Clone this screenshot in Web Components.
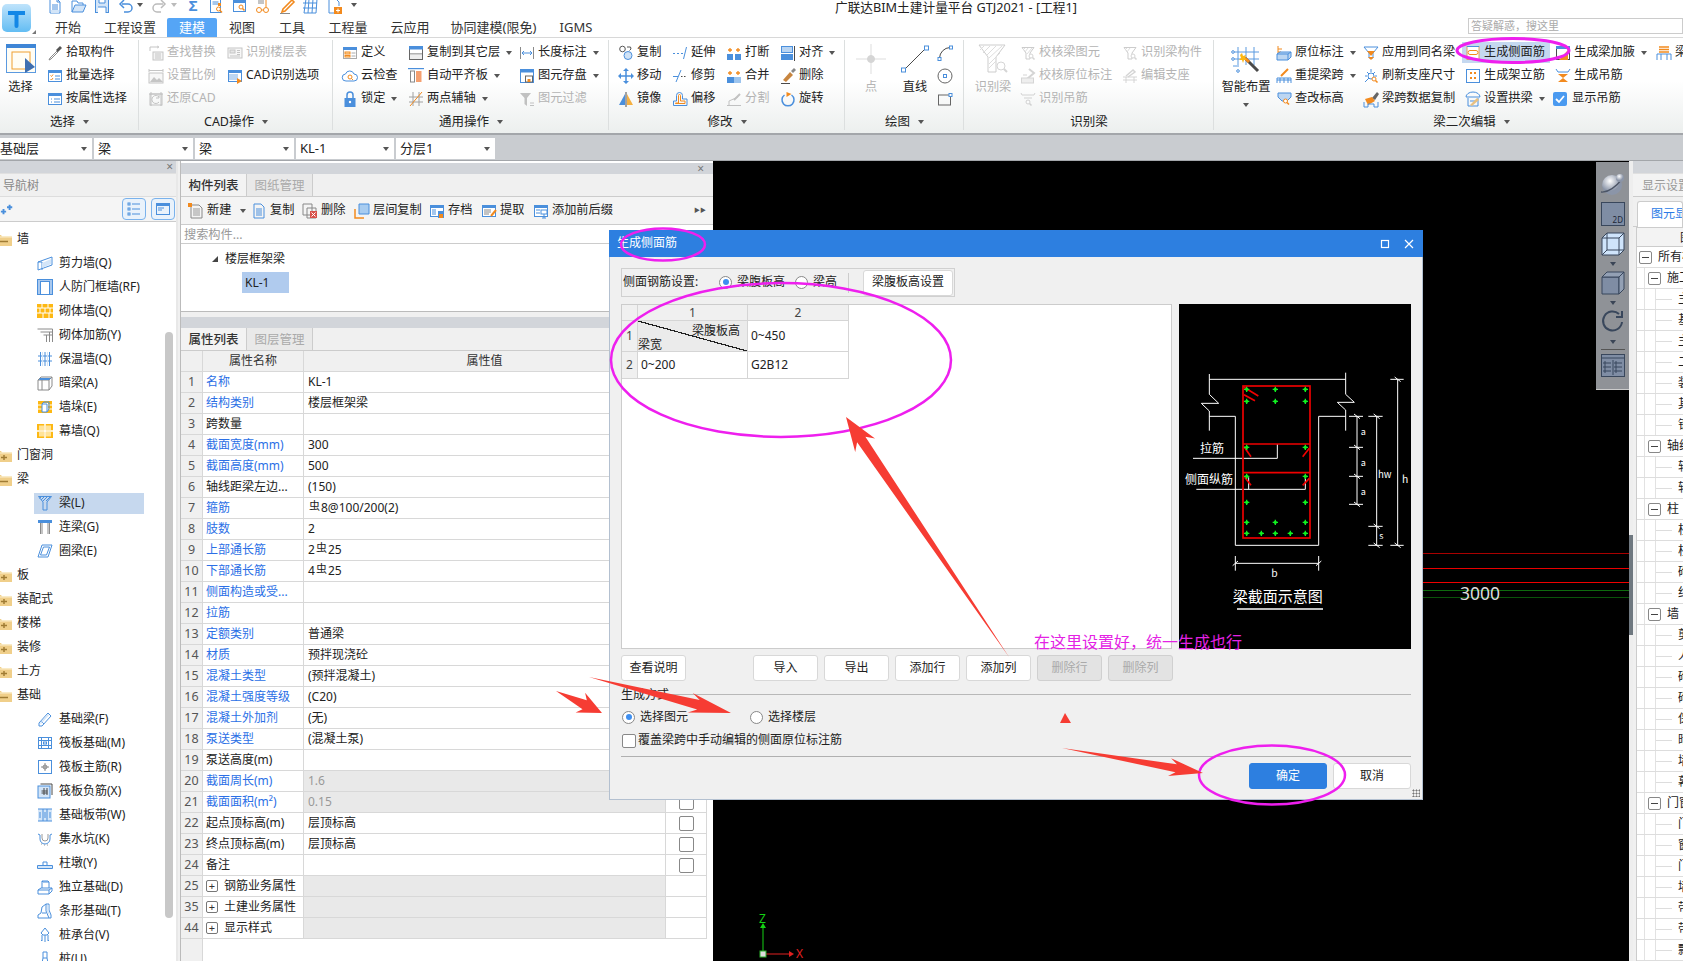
<!DOCTYPE html>
<html lang="zh">
<head>
<meta charset="utf-8">
<title>GTJ2021</title>
<style>
html,body{margin:0;padding:0;width:1683px;height:961px;overflow:hidden;background:#f0f0f0}
body{position:relative;font-family:"Noto Sans","Noto Sans CJK SC",sans-serif;font-size:12px;color:#222;line-height:1.2}
.work{display:flex;height:800px}
</style>
</head>
<body>
<app-title></app-title>
<rb-bar>
  <rb-group label="选择" caret style="width:139px"><rb-col style="width:41px"><rb-big icon="select" size="30">选择</rb-big></rb-col><rb-col style="width:6px"></rb-col><rb-col style="width:90px"><rb-item icon="pick">拾取构件</rb-item><rb-item icon="batch">批量选择</rb-item><rb-item icon="attr">按属性选择</rb-item></rb-col></rb-group>
  <rb-group label="CAD操作" caret style="width:194px;--pad:9px"><rb-col style="width:79px"><rb-item icon="find" off>查找替换</rb-item><rb-item icon="setscale" off>设置比例</rb-item><rb-item icon="restorecad" off>还原CAD</rb-item></rb-col><rb-col><rb-item icon="floorlist" off>识别楼层表</rb-item><rb-item icon="cadopt">CAD识别选项</rb-item></rb-col></rb-group>
  <rb-group label="通用操作" caret style="width:276px;--pad:9px"><rb-col style="width:66px"><rb-item icon="define">定义</rb-item><rb-item icon="cloud">云检查</rb-item><rb-item icon="lock" caret>锁定</rb-item></rb-col><rb-col style="width:111px"><rb-item icon="copyfloor" caret>复制到其它层</rb-item><rb-item icon="autoalign" caret>自动平齐板</rb-item><rb-item icon="twoaxis" caret>两点辅轴</rb-item></rb-col><rb-col><rb-item icon="dimlen" caret>长度标注</rb-item><rb-item icon="save2" caret>图元存盘</rb-item><rb-item icon="filter" off>图元过滤</rb-item></rb-col></rb-group>
  <rb-group label="修改" caret style="width:236px;--pad:9px"><rb-col style="width:54px"><rb-item icon="copy">复制</rb-item><rb-item icon="move">移动</rb-item><rb-item icon="mirror">镜像</rb-item></rb-col><rb-col style="width:54px"><rb-item icon="extend">延伸</rb-item><rb-item icon="trim">修剪</rb-item><rb-item icon="offset">偏移</rb-item></rb-col><rb-col style="width:54px"><rb-item icon="break">打断</rb-item><rb-item icon="merge">合并</rb-item><rb-item icon="split" off>分割</rb-item></rb-col><rb-col><rb-item icon="align" caret>对齐</rb-item><rb-item icon="erase">删除</rb-item><rb-item icon="rotate">旋转</rb-item></rb-col></rb-group>
  <rb-group label="绘图" caret style="width:119px;--pad:12px"><rb-col style="width:28px"><rb-big icon="point" size="30" off>点</rb-big></rb-col><rb-col style="width:12px"></rb-col><rb-col style="width:36px"><rb-big icon="line" size="30">直线</rb-big></rb-col><rb-col style="width:4px"></rb-col><rb-col><rb-item icon="arc"></rb-item><rb-item icon="circle"></rb-item><rb-item icon="rect"></rb-item></rb-col></rb-group>
  <rb-group label="识别梁" style="width:250px;--pad:7px"><rb-col style="width:44px"><rb-big icon="recogbeam" size="30" off>识别梁</rb-big></rb-col><rb-col style="width:5px"></rb-col><rb-col style="width:102px"><rb-item icon="checkbeam" off>校核梁图元</rb-item><rb-item icon="checkpos" off>校核原位标注</rb-item><rb-item icon="recoghang" off>识别吊筋</rb-item></rb-col><rb-col><rb-item icon="recogmember" off>识别梁构件</rb-item><rb-item icon="editsupport" off>编辑支座</rb-item></rb-col></rb-group>
  <rb-group label="梁二次编辑" caret last style="width:469px;--pad:8px;--lab:23px"><rb-col style="width:48px"><rb-big icon="smart" size="30" caret>智能布置</rb-big></rb-col><rb-col style="width:6px"></rb-col><rb-col style="width:87px"><rb-item icon="origmark" caret>原位标注</rb-item><rb-item icon="reextract" caret>重提梁跨</rb-item><rb-item icon="checkelev">查改标高</rb-item></rb-col><rb-col style="width:102px"><rb-item icon="applysame">应用到同名梁</rb-item><rb-item icon="refresh">刷新支座尺寸</rb-item><rb-item icon="spancopy">梁跨数据复制</rb-item></rb-col><rb-col style="width:90px"><rb-item icon="sidebar" hot>生成侧面筋</rb-item><rb-item icon="rackbar">生成架立筋</rb-item><rb-item icon="archbeam" caret>设置拱梁</rb-item></rb-col><rb-col style="width:101px"><rb-item icon="haunch" caret>生成梁加腋</rb-item><rb-item icon="hangbar">生成吊筋</rb-item><rb-item icon="showhang" tight>显示吊筋</rb-item></rb-col><rb-col><rb-item icon="beamx">梁</rb-item></rb-col></rb-group>
</rb-bar>
<combo-bar><ui-combo style="width:92px" flush>基础层</ui-combo><ui-combo style="width:99px">梁</ui-combo><ui-combo style="width:99px">梁</ui-combo><ui-combo style="width:98px">KL-1</ui-combo><ui-combo style="width:99px">分层1</ui-combo></combo-bar>
<div class="work">
  <nav-panel>
    <nav-folder open>墙</nav-folder>
    <nav-item icon="shear">剪力墙(Q)</nav-item><nav-item icon="rf">人防门框墙(RF)</nav-item><nav-item icon="brick">砌体墙(Q)</nav-item><nav-item icon="brickbar">砌体加筋(Y)</nav-item><nav-item icon="insul">保温墙(Q)</nav-item><nav-item icon="hidden">暗梁(A)</nav-item><nav-item icon="pier">墙垛(E)</nav-item><nav-item icon="curtain">幕墙(Q)</nav-item>
    <nav-folder>门窗洞</nav-folder><nav-folder open>梁</nav-folder>
    <nav-item icon="beam" selected>梁(L)</nav-item><nav-item icon="linkbeam">连梁(G)</nav-item><nav-item icon="ringbeam">圈梁(E)</nav-item>
    <nav-folder>板</nav-folder><nav-folder>装配式</nav-folder><nav-folder>楼梯</nav-folder><nav-folder>装修</nav-folder><nav-folder>土方</nav-folder><nav-folder open>基础</nav-folder>
    <nav-item icon="fbeam">基础梁(F)</nav-item><nav-item icon="raft">筏板基础(M)</nav-item><nav-item icon="raftmain">筏板主筋(R)</nav-item><nav-item icon="raftneg">筏板负筋(X)</nav-item><nav-item icon="band">基础板带(W)</nav-item><nav-item icon="sump">集水坑(K)</nav-item><nav-item icon="cap">柱墩(Y)</nav-item><nav-item icon="isolated">独立基础(D)</nav-item><nav-item icon="stripf">条形基础(T)</nav-item><nav-item icon="pilecap">桩承台(V)</nav-item><nav-item icon="pile">桩(U)</nav-item>
  </nav-panel>
  <list-panel>
    <prop-row n="1" name="名称" val="KL-1" link check></prop-row>
    <prop-row n="2" name="结构类别" val="楼层框架梁" link check></prop-row>
    <prop-row n="3" name="跨数量" check></prop-row>
    <prop-row n="4" name="截面宽度(mm)" val="300" link check></prop-row>
    <prop-row n="5" name="截面高度(mm)" val="500" link check></prop-row>
    <prop-row n="6" name="轴线距梁左边..." val="(150)" check></prop-row>
    <prop-row n="7" name="箍筋" val="虫8@100/200(2)" link check></prop-row>
    <prop-row n="8" name="肢数" val="2" link check></prop-row>
    <prop-row n="9" name="上部通长筋" val="2虫25" link check></prop-row>
    <prop-row n="10" name="下部通长筋" val="4虫25" link check></prop-row>
    <prop-row n="11" name="侧面构造或受..." link check></prop-row>
    <prop-row n="12" name="拉筋" link check></prop-row>
    <prop-row n="13" name="定额类别" val="普通梁" link check></prop-row>
    <prop-row n="14" name="材质" val="预拌现浇砼" link check></prop-row>
    <prop-row n="15" name="混凝土类型" val="(预拌混凝土)" link check></prop-row>
    <prop-row n="16" name="混凝土强度等级" val="(C20)" link check></prop-row>
    <prop-row n="17" name="混凝土外加剂" val="(无)" link check></prop-row>
    <prop-row n="18" name="泵送类型" val="(混凝土泵)" link check></prop-row>
    <prop-row n="19" name="泵送高度(m)" check></prop-row>
    <prop-row n="20" name="截面周长(m)" val="1.6" link ro check></prop-row>
    <prop-row n="21" name="截面面积(m²)" val="0.15" link ro check></prop-row>
    <prop-row n="22" name="起点顶标高(m)" val="层顶标高" check></prop-row>
    <prop-row n="23" name="终点顶标高(m)" val="层顶标高" check></prop-row>
    <prop-row n="24" name="备注" check></prop-row>
    <prop-row n="25" name="钢筋业务属性" group></prop-row>
    <prop-row n="35" name="土建业务属性" group></prop-row>
    <prop-row n="44" name="显示样式" group></prop-row>
  </list-panel>
  <cad-canvas></cad-canvas>
  <dock-rail></dock-rail>
  <disp-panel>
    <disp-row level="0">所有构件</disp-row>
    <disp-row level="1">施工段</disp-row><disp-row level="2">主</disp-row><disp-row level="2">基</disp-row><disp-row level="2">主</disp-row><disp-row level="2">二</disp-row><disp-row level="2">装</disp-row><disp-row level="2">其</disp-row><disp-row level="2">钢</disp-row>
    <disp-row level="1">轴线</disp-row><disp-row level="2">轴</disp-row><disp-row level="2">轴</disp-row>
    <disp-row level="1">柱</disp-row><disp-row level="2">柱</disp-row><disp-row level="2">柱</disp-row><disp-row level="2">砌</disp-row><disp-row level="2">约</disp-row>
    <disp-row level="1">墙</disp-row><disp-row level="2">剪</disp-row><disp-row level="2">人</disp-row><disp-row level="2">砌</disp-row><disp-row level="2">砌</disp-row><disp-row level="2">保</disp-row><disp-row level="2">暗</disp-row><disp-row level="2">墙</disp-row><disp-row level="2">幕</disp-row>
    <disp-row level="1">门窗洞</disp-row><disp-row level="2">门</disp-row><disp-row level="2">窗</disp-row><disp-row level="2">门</disp-row><disp-row level="2">墙</disp-row><disp-row level="2">带</disp-row><disp-row level="2">带</disp-row><disp-row level="2">飘</disp-row>
  </disp-panel>
</div>
<side-dialog heading="生成侧面筋"></side-dialog>
<anno-layer></anno-layer>

<script>
const b='#4a8fdc',lb='#d3e5f8',o='#f28a1e',g='#8a8a8a',k='#4a4a4a',y='#fdb813',ly='#ffe39a';
const L=(d,s=b,w=1)=>`<path d="${d}" fill="none" stroke="${s}" stroke-width="${w}"/>`;
const F=(d,f=b)=>`<path d="${d}" fill="${f}"/>`;
const R=(x,yy,w,h,s=b,f='none',sw=1)=>`<rect x="${x}" y="${yy}" width="${w}" height="${h}" fill="${f}" stroke="${s}" stroke-width="${sw}"/>`;
const C=(x,yy,r,s=b,f='none',sw=1)=>`<circle cx="${x}" cy="${yy}" r="${r}" fill="${f}" stroke="${s}" stroke-width="${sw}"/>`;
const win=(s=b)=>R(1.5,2.5,13,11,s,'#fff')+F('M1 2h14v3H1z',s);
const funnel=(s=b,f='none')=>L('M2 2.5h12L10 8v6H6V8z',s)+(f!='none'?F('M3 3h10L9.5 8H6.5z',f):'');
const mag=(x,yy,s=o)=>C(x,yy,2,s,'#fff')+L(`M${x+1.5} ${yy+1.5}l2 2`,s,1.6);
const ICONS={
select:`<svg viewBox="0 0 30 30">${R(.5,.5,29,28,'#5b9ae0','#fffdf5')}${F('M0 0h30v4H0z','#3f86d6')}${R(6,8,18,17,'#f0a030','none')}${F('M19 14l10 9-10 6z','#3f6fb0')}</svg>`,
pick:L('M3 13l-1 2 2-1 7-7-1-1z',g)+F('M10 4l3-3 2 2-3 3 -1 1-2-2z','#555'),
batch:win()+L('M3.5 7.5l1 1 1.5-2M3.5 11l1 1 1.5-2',o)+L('M8 8h5M8 11h5',b),
attr:win()+L('M4 8h1M4 11h1M7 8h6M7 11h6',b),
find:R(5,7,10,8,g,'#e8e8e8')+L('M7 9h6M7 11h6M7 13h6',g)+L('M2 6V2h7M9 1l2 1-2 1',g),
setscale:R(1,5,14,10,g,'#eee')+F('M2 14l4-5 3 3 2-2 4 4z',g)+L('M1 1v3M15 1v3M1 2.5h14',g),
restorecad:R(2,3,12,11,g)+L('M1 3h14M3 1v14M13 1v14',g)+L('M11 6a4 4 0 1 0 0 5M11 4v3H8',g),
floorlist:R(1,3,14,10,g,'#eee')+R(3,5,5,3,g,'#ccc')+L('M10 5.5h3M10 7.5h3M10 9.5h3M3 11h10',g),
cadopt:win()+F('M2 6h9v6H2z','#bcd6f2')+F('M10 10l5 3-5 3z',o),
define:R(1.5,2.5,13,11,'#aaa','#fff')+F('M1 2h14v3H1z',b)+R(3,7,5,2,o,'#fde0b0')+R(3,10.5,5,1.5,o,'#fde0b0')+L('M9.5 8h4M9.5 11h4','#aaa'),
cloud:L('M4 13a3.5 3.5 0 0 1-.5-7A4.5 4.5 0 0 1 12 6a3.5 3.5 0 0 1 0 7z',b)+C(8,9,2,o)+L('M9.5 10.5l1.5 1.5',o),
lock:F('M2.5 7h11v9h-11z',b)+L('M5 7V4a3 3 0 0 1 6 0v3',b,1.5)+C(8,11,1.2,'none','#fff'),
copyfloor:R(1.5,1.5,13,13,'#666','#fff')+F('M1 1h14v3.5H1z',b)+L('M1 9h14','#666')+F('M2 9.5h12V14H2z','#eee'),
autoalign:F('M0 0h16v1.2H0z',b)+R(2.5,3,4,11,'#888','#fff')+F('M8 3h5.5v11H8z','#f5a070'),
twoaxis:L('M1 6h14M1 11h14M5 1v14M11 1v14','#a0a0a0')+L('M2 15L14 1',o),
dimlen:L('M1.5 2v12M14.5 2v12',g)+L('M3 8h10M3 8l2-2M3 8l2 2M13 8l-2-2M13 8l-2 2',b),
save2:R(1.5,1.5,13,13,b,'#fff')+F('M1 1h14v3.5H1z',b)+R(6.5,8,7,6,'#666','#fff')+F('M8.5 11h3v3h-3z',o),
filter:F('M1 2h11L8 7v8L5.5 13V7z','#888')+L('M11 12h4M11 14.5h4',g),
copy:C(4.5,4,2.8,'#555')+C(10,10.5,4,b,'#cfe2f6')+L('M9 2h3.5l.5 2M11.5 5.5L13 4','#555'),
move:L('M8 2v12M2 8h12',b,1.5)+F('M8 0l3 3H5zM8 16l3-3H5zM0 8l3-3v6zM16 8l-3-3v6z'),
mirror:F('M1 14L7 3v11z')+F('M15 14L9 3v11z','#f5b041')+L('M8 1v15',k),
extend:L('M1 8.5h2M5 8.5h2M9 8.5h2',b)+L('M14.5 2l-3 12',b),
trim:L('M1 8.5h5',b)+L('M9 8.5h1.5M12 8.5h1.5',k)+L('M4 14l5-12',b),
offset:L('M1.5 14.5V10h3V4.5a3 3 0 0 1 6 0V8h4.5v6.5z',b)+L('M3.5 12.5V12h3V4.5a1 1 0 0 1 2 0V10h4.5v2.500z',o),
break:F('M1 9h6v6H1zM9 9h6v6H9z')+L('M2 5h4M4 3v4M10 5h4M12 3v4',o,1.3),
merge:F('M1 9h14v6H1z')+F('M8 9h7v6H8z','#9cc4ee')+L('M2 5h4M4 3v4M10 5h4M12 3v4',o,1.3),
split:L('M1 14.500h14M3 14V10l9-4',g)+L('M8 9l6-6',g,2),
align:R(1.5,1.5,11,6,b,'#b8d4f2')+F('M1 9h12v6H1z')+L('M14.500 1v15',k),
erase:F('M3 12l7-8 3 3-7 7z','#c8853f')+F('M11 3l3-3 2 2-3 3z','#888')+L('M1 15.500h9',k),
rotate:L('M11.500 4a6 6 0 1 1-7 0',b,1.5)+F('M6.500 1l5 2-5 3z',o),
point:`<svg viewBox="0 0 30 30">${L('M15 0v30M0 15h30','#bbb')}${C(15,15,3.5,'#aaa','#aaa')}</svg>`,
line:`<svg viewBox="0 0 30 30">${L('M4 26L26 4',k)}${R(1.5,24,4,4,b,'#fff')}${R(24.5,2,4,4,b,'#fff')}</svg>`,
arc:L('M2.5 13A11 11 0 0 1 13 2.500',k)+R(1,12.500,3,3,b,'#fff')+R(12.500,1,3,3,b,'#fff'),
circle:C(8,8,7,'#666')+R(6.500,6.500,3,3,b,'#fff'),
rect:R(1.500,4,12,10,'#666')+R(12,2.500,3,3,b,'#fff'),
recogbeam:`<svg viewBox="0 0 30 30">${L('M1 1h26L18 13v15H10V13z','#999')}${L('M6 2l-4 4M12 2L5 9M18 2L9 11M24 2L11 14M22 9L11 20M18 17L11 24','#bbb')}${C(23,22,4,'#aaa','#fff')}${L('M26 25l3 3','#aaa',2)}</svg>`,
checkbeam:funnel('#999')+L('M5 3L3 5M8 3L5 7M12 3L7 9','#bbb')+mag(11,11,'#aaa'),
checkpos:L('M9 1l5 4-7 6','#aaa',2)+R(1.500,10,12,5,'#aaa','#ddd')+L('M3 7h4','#aaa'),
recoghang:L('M1 2l1 2h12l1-2','#aaa')+L('M4 7h8M6 10h4','#aaa')+mag(8,11,'#aaa'),
recogmember:funnel('#999')+L('M5 3L3 5M8 3L5 7','#bbb')+mag(11,11,'#aaa'),
editsupport:L('M1 9h14M4 9v6M12 9v6M1 12h14','#aaa')+L('M4 8l7-6 2 2-7 5','#aaa',1.5),
smart:`<svg viewBox="0 0 30 30">${L('M7 3v18M15 3v18M23 3v18M2 8h26M2 15h26M2 22h6','#5b9ae0')}${L('M14 14l13 13',k,3)}${L('M14 14l4 4',o,3)}${F('M11 9l1 3 3-1-1 3 2 2-3 0-1 3-1-3-3 0 2-2-1-3z',y)}${C(2,8,1.3,b,'#fff')}${C(2,15,1.3,b,'#fff')}${C(7,27,1.3,b,'#fff')}</svg>`,
origmark:L('M2 1v7M2 4h4M2 7h3',o)+F('M1 9l3-2h11v5l-3 3H1z','#bcd6f2')+L('M1 9l3-2h11v5l-3 3H1zM1 9h11v6M12 9l3-2',b),
reextract:L('M1 15V10h14v5M1 12h14M4 10v5M8 10v5M12 10v5',b)+L('M5 8l7-7',o,2),
checkelev:F('M2 2h13v4l-4 4H6L2 6z','#bcd6f2')+L('M2 2h13v4l-4 4H6L2 6z',b)+mag(9.500,10,o),
applysame:L('M1 2h14L10 8v5H6V8z',b)+F('M4 6h8l-4 5z',o)+F('M5 12h6l-3 3z',o),
refresh:L('M8 1v3M2 8h2M14 8h-2M4 4l2 2M12 4l-2 2M2 14l4-4',b)+C(8,8,3,b)+mag(11,11,o),
spancopy:F('M9 7l5-6 2 2-4 6z','#666')+F('M2 8l7-2 3 4-7 4z',o)+L('M1 11v5h4v-3h6v3h4v-5',b),
sidebar:R(2,1.500,12,13,'#e0a060','#fff')+L('M5 5.500h6a2 2 0 0 1 0 4H5a2 2 0 0 1 0-4z',o)+L('M2 1.500h12',b),
rackbar:R(1.500,1.500,13,13,b,'#fff')+F('M5 4h2v2H5zM9 4h2v2H9zM5 9h2v2H5zM9 9h2v2H9z',o),
archbeam:L('M1 6a7 5 0 0 1 14 0M3 7v8h10V7',b)+L('M1 6h14M5 10h6',b)+F('M5 14l7-7 2 2-7 6z','#e8c080'),
haunch:R(1.500,1.500,13,13,k,'#fff')+F('M1 1h14v3H1z',b)+F('M4 15l9-10v10z',o),
hangbar:L('M1 1l2 3h10l2-3',b)+F('M3 6h10L8 10z',o)+F('M3 14h10L8 10z',o),
showhang:`<svg viewBox="0 0 16 16"><rect x="1" y="1" width="14" height="14" rx="2" fill="#4a9af0"/>${L('M4 8l3 3 5-6','#fff',1.800)}</svg>`,
beamx:L('M1 15V9h14v6M5 9v6M11 9v6',b)+L('M3 2h10M3 4.500h10M3 7h10',o,1.300),
shear:L('M1 15V7l14-5v8L1 15M1 7h4v8',b)+F('M5 8l9-4v5L5 13z',lb),
rf:R(.5,.5,15,15,b,'#a8c8ee')+R(3.500,2.500,9,13,b,'#fff'),
brick:F('M0 1h16v14H0z',y)+L('M0 5h16M0 10h16M5 1v4M11 1v4M3 5v5M8 5v5M13 5v5M6 10v5M12 10v5','#fff'),
brickbar:L('M.5 2h15M3.500 5h12M6.500 8h9M15.500 2v13M12.500 5v10M9.500 8v7',g),
insul:L('M3.500 1v14M12.500 1v14',b)+L('M8 1v14',b)+L('M1 5h14M1 10h14',b)+L('M5.500 1v14M10.500 1v14',lb),
hidden:L('M1 5l3-3h11v9l-3 4H1zM1 5h11v10M12 5l3-3M5 5v10',g)+F('M3 3h11l-2 2H2z',b),
pier:F('M1 2h14v12H1z',y)+L('M1 6h14M1 10h14','#fff')+F('M5 4h6v9H5z','#fff')+L('M5 5h5v8H5zM5 5l2-2h5v7l-2 3',b),
curtain:F('M0 1h16v14H0z',y)+L('M0 8h16M8 1v14','#fff',1.5)+F('M2 2.500h5V7H2zM9 2.500h5V7H9zM2 9h5v4.500H2zM9 9h5v4.500H9z',ly),
beam:L('M1.500 1.500h13L10 7v8H6V7z',b)+L('M4 2L2.500 3.500M7 2L4 5M10 2L6 6M13 2l-4 4',b),
linkbeam:F('M1 1h14v3H1z',b)+L('M3.500 4v11M12.500 4v11M5 4v11M11 4v11',g),
ringbeam:L('M5 2h10l-4 12H1z',b)+L('M6.500 4h6l-3 8h-6z',b),
fbeam:L('M2 12L11 2l3 3-9 10H2z',b)+L('M4 10l3 3',b)+F('M3 12l8-9 1 1-8 9z',lb),
raft:R(1.500,2.500,13,11,b)+L('M4.500 2v12M11.500 2v12M1 5.500h14M1 10.500h14',b)+R(6.500,7,3,2,b),
raftmain:R(1.500,1.500,13,13,b)+L('M8 4v8M4 8h8',g)+C(8,8,2,g),
raftneg:R(1,3,12,12,b,lb)+L('M3.500 1h11.500v11M7 5v7M10 5v7M4.500 8h6M4.500 10h6',k),
band:F('M1 2h14v12H1z',lb)+L('M1 2h14M1 14h14M6 2v12M10 2v12',b)+L('M3 5v6M8 5v6M13 5v6',b),
sump:L('M1 3l2 1v4a5 5 0 0 0 10 0V4l2-1',b)+L('M5 3v4a3 3 0 0 0 6 0V3','#999')+L('M4 13h1M7 14h1M10 14h1','#999'),
cap:F('M1 11h14v2H1z',lb)+L('M.5 10.500h15v3H.5zM6 7h4v3.500H6z',b),
isolated:L('M1 15v-4l3-2h11v3l-3 3zM1 11h11v4M12 11l3-2M5 9V2h6l1 1v6M5 2l1 1h6',b),
stripf:L('M1 15v-3l3-2 1-6 4-3h3v6l2 5v3zM9 1v7l3 7M5 10h4',b)+F('M10 2h1.500v6l1.500 5-3-4z',lb),
pilecap:L('M8 1L12 6l-2 2H6L4 6zM5 8v6M8 8v7M11 8v6M5 14l-1-1M11 14l1-1',b),
pile:L('M6 1h4v6h-4zM6 7l-1 5M10 7l1 5M2 13h12v2H2z',b),
tnew:L('M3 2h8l3 3v10H3z','#888')+L('M5 6h7M5 8h7M5 10h7M5 12h7','#999')+F('M0 0h4v4H0z',o),
tcopy:L('M3 1h7l3 3v11H3z',b)+L('M5 6h6M5 8h6M5 10h6M5 12h6',b),
tdel:L('M1 1h9v11H1z','#888')+L('M5 5h9v10H5z','#888')+F('M8 8h7v7H8z','#d8504a')+L('M9.500 9.500l4 4M13.500 9.500l-4 4','#fff'),
tfloor:F('M5 1h10v10H5z','#a8ccf0')+L('M5 1h10v10H5z',b)+L('M1 6v9h9',o,1.5),
archive:win()+L('M3 7h4M3 9h4M3 11h4',b)+F('M9 8h6v7H9z',b)+F('M10 11h4v4h-4z',o),
extract:win()+L('M3 7h7M3 9h7M3 11h5','#888')+L('M10 13l5-6',o,2),
prefix:win()+L('M3 7h4M3 10h4',b)+R(8,7,6,4,b,'#fff')+L('M11 11v4M9 15h4',b),
qnew:L('M3 1h7l3 3v11H3z',b)+L('M10 1v3h3M5 7h6M5 9h6M5 11h6',b)+F('M4 12h8v3H4z',lb),
qopen:L('M1 14V3h5l1 2h5v2',b)+F('M1 14l3-7h11l-3 7z',lb)+L('M1 14l3-7h11l-3 7z',b),
qsave:R(1.500,1.500,13,13,b,lb)+F('M5 1h6v4H5z','#fff')+L('M5 1v4h6V1',b)+F('M4 9h8v6H4z','#fff')+L('M4 9h8v6',b),
undo:L('M4 6h6a4 4 0 0 1 0 8H6',b,1.5)+L('M6 2L2 6l4 4',b,1.5),
redo:L('M12 6H6a4 4 0 0 0 0 8h4','#bbb',1.5)+L('M10 2l4 4-4 4','#bbb',1.5),
sigma:`<text x="8" y="13" text-anchor="middle" font-size="15" font-weight="700" fill="${b}" font-family="Noto Sans">Σ</text>`,
rep:R(2.500,1.500,10,13,b,'#fff')+L('M4.500 4h6M4.500 6h6',b)+F('M10 5h3v3h-3z',o)+mag(10.500,11,o),
qfind:R(1.500,2.500,12,11,b,'#fff')+F('M1 2h13v3H1z',b)+mag(9,9,o),
glasses:L('M2 1h9v8',o)+L('M3 3h6M3 5h6',g)+C(4,12,2.500,o)+C(11,12,2.500,o)+L('M6.500 12h2',o),
pen:L('M4 11L13 2l2 2-9 9-3 1z',o,1.600)+L('M1 15.500h10',g),
qgrid:L('M2 15L4 1h11l-1 14zM1 5h14M1 10h14M7 1L6 15M11 1l-1 14',b),
qdoc:L('M3 1h7l3 3v4M3 1v14h5',b)+F('M8 9h8v7H8z',o)+L('M12 10.500v4M10 12.500h4','#fff'),
vsphere:`<svg viewBox="0 0 24 24"><defs><radialGradient id="s" cx=".4" cy=".3"><stop offset="0" stop-color="#fff"/><stop offset="1" stop-color="#8b95a8"/></radialGradient></defs><circle cx="11" cy="13" r="10" fill="url(#s)"/><path d="M0 20Q10 21 22 6" stroke="#4c5566" stroke-width="1.300" fill="none"/><circle cx="19" cy="6" r="4" fill="url(#s)"/></svg>`,
v2d:`<svg viewBox="0 0 24 24"><rect x=".5" y=".5" width="23" height="23" fill="#7f8da4" stroke="#39475c"/><text x="22" y="21" text-anchor="end" font-size="8" fill="#1d2635" font-family="Noto Sans">2D</text></svg>`,
vwire:`<svg viewBox="0 0 24 24"><path d="M1 6h17v17H1zM1 6l5-5h17v17l-5 5M18 6l5-5" fill="#cfe4fb" stroke="#39475c"/><path d="M6 1v17h17M6 18l-5 5" stroke="#39475c" fill="none"/></svg>`,
vsolid:`<svg viewBox="0 0 24 24"><path d="M1 6h17v17H1z" fill="#7f8da4" stroke="#39475c"/><path d="M1 6l5-5h17l-5 5zM18 6l5-5v17l-5 5z" fill="#93a0b4" stroke="#39475c"/></svg>`,
vrot:`<svg viewBox="0 0 24 24"><path d="M21 12a9.500 9.500 0 1 1-3-8" fill="none" stroke="#39475c" stroke-width="2"/><path d="M21 1v6h-6" fill="none" stroke="#39475c" stroke-width="2"/></svg>`,
vtab:`<svg viewBox="0 0 24 24"><rect x=".5" y="1.500" width="23" height="22" fill="#7f8da4" stroke="#39475c"/><path d="M.5 5h23M12 7v15M3 9h2v2H3zM3 13h2v2H3zM3 17h2v2H3zM14 9h2v2h-2zM14 13h2v2h-2zM14 17h2v2h-2zM6 10h4M6 14h4M6 18h4M17 10h4M17 14h4M17 18h4" stroke="#39475c" fill="none"/></svg>`,
listbtn:R(2,2,2,2)+R(2,7,2,2)+R(2,12,2,2)+L('M6 3h8M6 8h8M6 13h8'),
wndbtn:R(1.500,2.500,13,11)+F('M1 2h14v3H1z')+L('M3 7h6M3 9h4'),
stars:L('M1 11h6M4 8v6M8 6h6M11 3v6',b,2.2),
};
function svgOf(n){const v=ICONS[n]||'';return v.startsWith('<svg')?v:`<svg viewBox="0 0 16 16">${v}</svg>`}
function def(tag,css,render){customElements.define(tag,class extends HTMLElement{connectedCallback(){if(this.shadowRoot)return;const r=this.attachShadow({mode:'open'});r.innerHTML=`<style>${css}</style>`+render(this)}})}
const has=(e,a)=>e.hasAttribute(a),at=(e,a,d='')=>e.getAttribute(a)??d;

def('x-icon',`:host{display:inline-flex;flex:none;line-height:0}svg{width:100%;height:100%;display:block;overflow:visible}:host([off]){filter:grayscale(1) opacity(.5)}`,
 e=>{const s=at(e,'size','16');e.style.width=s+'px';e.style.height=s+'px';return svgOf(at(e,'name'))});
const caretCss=`.car{display:inline-block;width:0;height:0;border:3.5px solid transparent;border-top:4px solid #555;border-bottom:0;margin-left:6px;flex:none}`;

def('app-title',`:host{display:grid;grid-template-columns:43px 1fr;height:38px;background:#fff;border-bottom:1px solid #d8d8d8;box-sizing:border-box;overflow:hidden}
.logo{display:flex;padding:4px 0 0 2px;position:relative}.logo i{width:0;height:0;border-left:4px solid transparent;border-bottom:4px solid #777;margin:26px 0 0 1px}
.q{display:flex;height:18px;align-items:flex-start;padding-left:4px;overflow:hidden;position:relative}
.q x-icon{margin-top:-2px;margin-right:7.500px}
.car{display:inline-block;width:0;height:0;border:3px solid transparent;border-top:4px solid #555;border-bottom:0;margin:3px 8px 0 -4px}.car.d{border-top-color:#bbb}
.t{margin-left:478px;font-size:12.700px;line-height:14px;white-space:nowrap}
.tabs{display:flex;height:19px;margin-top:0}
.tab{display:flex;align-items:center;justify-content:center;font-size:13px;color:#333;height:19px}
.tab.on{background:#55a5f6;color:#fff;border-radius:2px 2px 0 0}
.s{margin-left:auto;width:215px;height:16px;box-sizing:border-box;border:1px solid #ccc;color:#aaa;padding-left:2px;line-height:14px;font-size:11px;white-space:nowrap;overflow:hidden}`,
 e=>`<div class="logo"><svg width="29" height="28" viewBox="0 0 29 28"><defs><linearGradient id="g" x1="0" y1="0" x2="0" y2="1"><stop offset="0" stop-color="#bfe3fb"/><stop offset="1" stop-color="#63bdf3"/></linearGradient></defs><rect width="29" height="28" rx="5" fill="url(#g)"/><path d="M6 7h17v4h-6.500v11a2 2 0 0 1-4 0V11H6z" fill="#1387e6"/></svg><i></i></div>
 <div><div class="q">${['qnew','qopen','qsave'].map(n=>`<x-icon name="${n}"></x-icon>`).join('')}<x-icon name="undo"></x-icon><span class="car"></span><x-icon name="redo"></x-icon><span class="car d"></span>${['sigma','rep','qfind','glasses','pen','qgrid','qdoc'].map(n=>`<x-icon name="${n}"></x-icon>`).join('')}<span class="car" style="margin:3px 0 0 2px"></span><span class="t">广联达BIM土建计量平台 GTJ2021 - [工程1]</span></div>
 <div class="tabs">${[['开始',50],['工程设置',74],['建模',50,1],['视图',50],['工具',50],['工程量',62],['云应用',62],['协同建模(限免)',105],['IGMS',60]].map(t=>`<div class="tab${t[2]?' on':''}" style="width:${t[1]}px">${t[0]}</div>`).join('')}<div class="s">答疑解惑，搜这里</div></div></div>`);

def('rb-bar',`:host{display:flex;height:97px;box-sizing:border-box;background:linear-gradient(#fff 45%,#ecefee);border-bottom:2px solid #a3a6aa;overflow:hidden}`,()=>`<slot></slot>`);
def('rb-group',`:host{display:flex;flex-direction:column;flex:none;height:95px;box-sizing:border-box;position:relative;background:linear-gradient(#dcdfdf,#dcdfdf) right 2px/1px 90px no-repeat}
:host([last]){background:none}
.c{display:flex;height:69px;padding:3px 0 0 var(--pad,0);}
.l{display:flex;align-items:center;justify-content:center;height:23px;color:#222;transform:translateX(var(--lab,0));font-size:12.500px}${caretCss}.car{margin-left:8px}`,
 e=>`<div class="c"><slot></slot></div><div class="l">${at(e,'label')}${has(e,'caret')?'<span class="car"></span>':''}</div>`);
def('rb-col',`:host{display:flex;flex-direction:column;flex:none}`,()=>`<slot></slot>`);
def('rb-item',`:host{display:flex;align-items:center;height:23px;font-size:12.200px;white-space:nowrap;color:#222}
:host([off]){color:#b4b4b4}
x-icon{margin-right:3px}:host([tight]) x-icon{margin:0 4px 0 -3px;}
:host([hot]){background:linear-gradient(#c5d8f0,#c5d8f0) 0 1px/88px 21px no-repeat;margin-left:-3px;padding-left:3px}${caretCss}`,
 e=>`<x-icon name="${at(e,'icon')}" ${has(e,'off')?'off':''}></x-icon><slot></slot>${has(e,'caret')?'<span class="car"></span>':''}`);
def('rb-big',`:host{display:flex;flex-direction:column;align-items:center;width:100%;font-size:12.200px;color:#222;white-space:nowrap}
:host([off]){color:#b4b4b4}x-icon{margin-top:3px}.t{height:26px;line-height:26px}${caretCss}.car{margin:3px 0 0}`,
 e=>`<x-icon name="${at(e,'icon')}" size="${at(e,'size','30')}" ${has(e,'off')?'off':''}></x-icon><div class="t"><slot></slot></div>${has(e,'caret')?'<span class="car"></span>':''}`);

def('combo-bar',`:host{display:flex;gap:2px;height:26px;box-sizing:border-box;padding-top:3px;background:#c9ccd0;border-bottom:1px solid #a3a6aa}`,()=>`<slot></slot>`);
def('ui-combo',`:host{display:flex;align-items:center;height:21px;box-sizing:border-box;background:#fff;padding:0 5px 0 4px;font-size:13px;white-space:nowrap}:host([flush]){padding-left:0}.s{flex:1}${caretCss}`,
 ()=>`<div class="s"><slot></slot></div><span class="car"></span>`);

const stripCss=`.strip{height:12px;background:#d2d5da;display:flex;justify-content:flex-end;align-items:center;color:#777;font-size:12px;line-height:12px;padding-right:3px}`;
def('nav-panel',`:host{display:flex;flex-direction:column;width:176px;flex:none;height:800px;background:#fff;overflow:hidden;border-right:2px solid #e8e8e8;box-sizing:content-box}
${stripCss}.h{height:24px;line-height:24px;background:#f0f0f0;color:#888;padding-left:3px;border-top:1px solid #e0e0e0;border-bottom:1px solid #ddd;box-sizing:border-box}
.b{height:25px;box-sizing:border-box;background:#f5f5f5;border-bottom:1px solid #ccc;display:flex;align-items:center;gap:4px;padding-left:0}
.b>x-icon{margin-right:auto}
.bt{width:24px;height:22px;box-sizing:border-box;border:1px solid #7ab2ec;border-radius:4px;background:#e9f2fb;display:flex;align-items:center;justify-content:center;margin-right:1px}
.main{display:flex;flex:1;min-height:0}.list{flex:1;padding-top:5px;overflow:hidden;width:165px}
.sb{width:8px;flex:none;margin:110px 3px 0 0;height:586px;border-radius:4px;background:#c8c8c8}`,
 ()=>`<div class="strip">×</div><div class="h">导航树</div><div class="b"><x-icon name="stars" size="14"></x-icon><div class="bt"><x-icon name="listbtn"></x-icon></div><div class="bt"><x-icon name="wndbtn"></x-icon></div></div><div class="main"><div class="list"><slot></slot></div><div class="sb"></div></div>`);
def('nav-folder',`:host{display:flex;align-items:center;height:24px;font-size:12px;white-space:nowrap;overflow:hidden}svg{width:16px;height:13px;margin:0 5px 0 -4px;flex:none}`,
 e=>`<svg viewBox="0 0 16 13"><path d="M0 2h5l1 1.500h10V13H0z" fill="#f0cf8a"/><path d="M0 4h16" stroke="#fbeecb"/><path d="${has(e,'open')?'M2 8.500h10':'M5 8.500h6M8 6v5'}" stroke="#a07c34" stroke-width="1.500"/></svg><slot></slot>`);
def('nav-item',`:host{display:flex;align-items:center;height:24px;padding-left:34px;white-space:nowrap}
.in{display:flex;align-items:center;width:110px;height:21px;padding-left:3px;box-sizing:border-box;gap:6px}:host([selected]) .in{background:#c6d8ee}`,
 e=>`<div class="in"><x-icon name="${at(e,'icon')}"></x-icon><slot></slot></div>`);

def('list-panel',`:host{display:flex;flex-direction:column;width:533px;flex:none;margin-left:2px;height:800px;background:#fff;border-left:1px solid #bbb;box-sizing:border-box;overflow:hidden}
${stripCss}.strip{padding-right:9px;margin-top:2px;height:11px}
.tabs{display:flex;background:#f0f0f0;border-bottom:1px solid #ccc;box-sizing:border-box;height:23px}
.tabs div{display:flex;align-items:center;justify-content:center;width:65px;font-size:12.500px;border-right:1px solid #ccc;color:#aaa;background:#e9e9e9}.tabs div.on{color:#333;background:#f3f3f3;font-weight:500}
.tb{display:flex;align-items:center;height:28px;padding-left:7px;background:#f4f4f4;border-bottom:1px solid #ccc;box-sizing:border-box}
.tbi{display:flex;align-items:center;gap:3px;font-size:12.200px;white-space:nowrap;flex:none}${caretCss}
.more{margin-left:auto;margin-right:7px;color:#555;font-size:6px;letter-spacing:0}
.se{height:19px;line-height:19px;padding-left:3px;color:#999;background:#fff;border-bottom:1px solid #ccc;box-sizing:border-box;font-size:12.200px;}
.tree{height:68px;padding:5px 0 0 0;box-sizing:border-box;border-bottom:1px solid #bbb}
.pr{display:flex;align-items:center;height:20px;padding-left:31px;gap:7px}.pr i{width:0;height:0;border-left:6px solid transparent;border-bottom:6px solid #444}
.sel{margin:3px 0 0 61px;width:47px;height:21px;line-height:21px;background:#b0cbee;padding-left:3px;box-sizing:border-box}
.gap{height:5px;background:#f0f0f0;flex:none}
.hd{display:grid;grid-template-columns:22px 101px 362px 41px;height:21px;line-height:20px;text-align:center;background:#f0f0f0;color:#333;box-sizing:border-box;border-bottom:1px solid #d8d8d8;flex:none}
.hd div{border-right:1px solid #d8d8d8}
.gut{flex:1;width:22px;box-sizing:border-box;background:#f0f0f0;border-right:1px solid #d8d8d8}`,
 ()=>`<div class="strip">×</div><div class="tabs"><div class="on">构件列表</div><div>图纸管理</div></div>
 <div class="tb"><div class="tbi" style="width:63px"><x-icon name="tnew"></x-icon>新建<span class="car"></span></div><div class="tbi" style="width:51px"><x-icon name="tcopy"></x-icon>复制</div><div class="tbi" style="width:52px"><x-icon name="tdel"></x-icon>删除</div><div class="tbi" style="width:75px"><x-icon name="tfloor"></x-icon>层间复制</div><div class="tbi" style="width:52px"><x-icon name="archive"></x-icon>存档</div><div class="tbi" style="width:52px"><x-icon name="extract"></x-icon>提取</div><div class="tbi"><x-icon name="prefix"></x-icon>添加前后缀</div><span class="more">▶▶</span></div>
 <div class="se">搜索构件...</div>
 <div class="tree"><div class="pr"><i></i>楼层框架梁</div><div class="sel">KL-1</div></div>
 <div class="gap"></div><div class="strip" style="margin-top:0"></div><div class="tabs" style="margin-top:0"><div class="on">属性列表</div><div>图层管理</div></div>
 <div class="hd"><div></div><div>属性名称</div><div>属性值</div><div></div></div><slot></slot><div class="gut"></div>`);
def('prop-row',`:host{display:grid;grid-template-columns:22px 101px 362px 41px;height:21px;width:526px;flex:none;box-sizing:border-box;border-bottom:1px solid #d8d8d8;line-height:20px;white-space:nowrap}
.n{background:#f0f0f0;text-align:center;color:#555;border-right:1px solid #d8d8d8;font-size:12.500px}
.a{padding-left:3px;border-right:1px solid #d8d8d8;overflow:hidden;display:flex;align-items:center;gap:6px}.a.link{color:#2b6fe6}
.v{padding-left:4px;border-right:1px solid #d8d8d8}.v.ro{background:#e9e9e9;color:#999}.v.gr{background:#e9e9e9}
.c{display:flex;align-items:center;justify-content:center;border-right:1px solid #d8d8d8}
.cb{width:13px;height:13px;border:1px solid #888;border-radius:2px}
.p{width:10px;height:10px;border:1px solid #777;border-radius:2px;color:#333;display:flex;align-items:center;justify-content:center;line-height:10px;font-size:11px;flex:none}
sup{font-size:11px;line-height:0;vertical-align:2px;margin:0 1px}`,
 e=>{const gr=has(e,'group'),val=at(e,'val').replace('虫','<sup>虫</sup>');return `<div class="n">${at(e,'n')}</div><div class="a${has(e,'link')?' link':''}">${gr?'<span class="p">+</span>':''}${at(e,'name')}</div><div class="v${has(e,'ro')?' ro':''}${gr?' gr':''}">${val}</div><div class="c">${has(e,'check')?'<div class="cb"></div>':''}</div>`});

def('cad-canvas',`:host{display:block;position:relative;width:916px;flex:none;height:800px;background:#000;overflow:hidden}
.ln{position:absolute;left:0;right:0;height:1px}
.num{position:absolute;left:747px;top:420px;color:#ddd;font-size:17.500px;line-height:24px}
.bar{position:absolute;right:0;top:1px;width:33px;height:228px;background:#8f9297;display:flex;flex-direction:column;align-items:center;padding-top:10px;box-sizing:border-box;border-bottom:1px solid #ccc}
.bar x-icon{margin-bottom:6px}.bar .car{width:0;height:0;border:3px solid transparent;border-top:4px solid #3a4556;border-bottom:0;margin:0 0 5px}
.bar hr{width:24px;border:0;border-top:1px solid #555;margin:0 0 3px}
.giz{position:absolute;left:30px;top:750px}`,
 ()=>[[392,'#a80000'],[407,'#e80000'],[421,'#f00000'],[429,'#0e6a0e'],[436,'#0a520a']].map(l=>`<div class="ln" style="top:${l[0]}px;background:${l[1]}"></div>`).join('')+`<div class="num">3000</div>
 <div class="bar"><x-icon name="vsphere" size="24"></x-icon><x-icon name="v2d" size="24"></x-icon><x-icon name="vwire" size="24"></x-icon><span class="car"></span><x-icon name="vsolid" size="24"></x-icon><span class="car"></span><x-icon name="vrot" size="24"></x-icon><span class="car"></span><hr><x-icon name="vtab" size="24"></x-icon></div>
 <svg class="giz" width="70" height="50" viewBox="0 0 70 50"><path d="M20 43V16" stroke="#14d014"/><path d="M17 17l3-5 3 5z" fill="#14d014"/><path d="M20 43h27" stroke="#e02020"/><path d="M46 40l5 3-5 3z" fill="#e02020"/><rect x="17" y="40" width="6" height="6" fill="#ddd" stroke="#2ab02a"/><text x="16" y="12" fill="#14d014" font-size="12" font-family="Noto Sans">Z</text><text x="53" y="47" fill="#e02020" font-size="12" font-family="Noto Sans">X</text></svg>`);
def('dock-rail',`:host{display:block;width:4px;flex:none;background:#eee;height:800px}.k{margin-top:374px;height:100px;background:#6f7880}`,()=>`<div class="k"></div>`);
def('disp-panel',`:host{display:flex;flex-direction:column;flex:1;min-width:0;height:800px;background:#f0f0f0;overflow:hidden;font-size:12px}
${stripCss}.t{height:23px;line-height:23px;padding-left:9px;color:#999;background:#f3f3f3;border-bottom:1px solid #ccc;white-space:nowrap;border-top:1px solid #e0e0e0;box-sizing:border-box;height:24px}
.s{height:30px;padding:4px 0 0 4px;box-sizing:border-box;border-bottom:1px solid #ccc}.s div{height:26px;line-height:24px;padding-left:13px;color:#2b7be6;background:#fff;border:1px solid #ccc;border-bottom:0;border-radius:3px 3px 0 0;box-sizing:border-box;white-space:nowrap;overflow:hidden}
.h{height:21px;line-height:20px;margin-left:3px;background:#f3f3f3;border:1px solid #ccc;border-right:0;padding-left:43px;box-sizing:border-box;white-space:nowrap;overflow:hidden}
.l{margin-left:3px;background:#fff;flex:1;border-left:1px solid #ccc}`,
 ()=>`<div class="strip"></div><div class="t">显示设置</div><div class="s"><div>图元显示</div></div><div class="h">图层构件</div><div class="l"><slot></slot></div>`);
def('disp-row',`:host{display:flex;align-items:center;height:21px;box-sizing:border-box;border-bottom:1px solid #ddd;white-space:nowrap;overflow:hidden}
.box{width:13px;height:13px;box-sizing:border-box;border:1px solid #888;border-radius:2px;display:flex;align-items:center;justify-content:center;margin-right:6px;flex:none}.box i{width:7px;height:1px;background:#444}
.r{flex:none;align-self:stretch;border-right:1px solid #e2e2e2}.d{width:16px;height:1px;background:#ddd;margin-right:6px;flex:none}`,
 e=>{const lv=at(e,'level');return (lv=='0'?'<span style="width:2px;flex:none"></span>':lv=='1'?'<span class="r" style="width:7px"></span><span style="width:3px;flex:none"></span>':'<span class="r" style="width:7px"></span><span class="r" style="width:10px"></span>')+(lv=='2'?'<span class="d"></span>':'<span class="box"><i></i></span>')+'<slot></slot>'});

def('ui-radio',`:host{display:inline-flex;align-items:center;gap:5px;white-space:nowrap;font-size:12px;flex:none}.r{width:13px;height:13px;box-sizing:border-box;border:1px solid #888;border-radius:50%;background:#fff;display:flex;align-items:center;justify-content:center;flex:none}.r i{width:6px;height:6px;border-radius:50%;background:#3f8ff0}`,
 e=>`<span class="r">${has(e,'checked')?'<i></i>':''}</span><slot></slot>`);
def('ui-btn',`:host{display:flex;align-items:center;justify-content:center;flex:none;height:26px;box-sizing:border-box;background:#fff;border:1px solid #d8d8d8;border-radius:3px;font-size:12px;color:#222;white-space:nowrap}
:host([off]){background:#e3e3e3;color:#aaa;border-color:#d0d0d0}:host([primary]){background:#2d7fe0;border-color:#2d7fe0;color:#fff}`,()=>`<slot></slot>`);
const dots=[[230,268],[316,268],[406,268],[230,304],[316,304],[406,304],[230,442],[406,442],[230,529],[406,529],[230,607],[406,607],[230,667],[316,667],[406,667],[230,700],[274,700],[316,700],[361,700],[406,700]];
def('beam-figure',`:host{display:block;width:232px;height:345px;flex:none;background:#000}svg{display:block}text{font-family:"Noto Sans CJK SC",sans-serif;fill:#fff}`,
 ()=>`<svg width="232" height="345" viewBox="27 12 696 1035"><g fill="none" stroke="#fff" stroke-width="3">
 <path d="M118 222V283L146 310H94L118 333V392M118 238H527M527 218V283L553 307H502L527 330V392M118 349H196V736H446V349H527"/>
 <path d="M69 475H322V432M79 568H406V532M236 568V532"/>
 <path d="M561 349V613M537 349H579M537 442H579M537 529H579M537 613H579M620 349V736M595 349H638M595 679H638M595 736H638M683 238V736M661 238H701M661 736H701M196 790H446M196 768V812M446 768V812"/>
 <path d="M552 342l18 14M552 435l18 14M552 522l18 14M552 606l18 14M611 342l18 14M611 672l18 14M611 729l18 14M674 231l18 14M674 729l18 14M188 797l16-14M438 797l16-14"/>
 <path d="M201 927H459" stroke-width="5"/></g>
 <g fill="none" stroke="#f00000" stroke-width="5"><rect x="219" y="258" width="201" height="456"/><path d="M219 432H420M219 518H420M222 262L265 288M222 284L255 302M222 440L243 470M418 445L398 470M224 532L243 556M418 535L398 556"/></g>
 ${dots.map(d=>`<path d="M${d[0]} ${d[1]-8}v16M${d[0]-8} ${d[1]}h16" stroke="#10f020" stroke-width="4"/><circle cx="${d[0]}" cy="${d[1]}" r="5" fill="#10f020"/>`).join('')}
 <text x="90" y="458" font-size="36">拉筋</text><text x="45" y="552" font-size="36">侧面纵筋</text>
 <text x="572" y="405" font-size="27">a</text><text x="572" y="498" font-size="27">a</text><text x="572" y="585" font-size="27">a</text><text x="624" y="533" font-size="29">hw</text><text x="628" y="717" font-size="27">s</text><text x="696" y="548" font-size="31">h</text><text x="304" y="830" font-size="31">b</text>
 <text x="188" y="906" font-size="45">梁截面示意图</text></svg>`);
def('side-dialog',`:host{position:absolute;left:609px;top:230px;width:814px;height:570px;box-sizing:border-box;background:#f0f0f0;border:1px solid #b3c0d0;border-top:0;display:flex;flex-direction:column;font-size:12px;color:#222}
.ti{height:27px;flex:none;background:#2d7fe0;color:#fff;display:flex;align-items:center;padding:0 9px 0 8px;margin:0 -1px}.ti b{font-weight:400;margin-right:auto}.ti svg{margin-left:14px}
.body{flex:1;display:flex;flex-direction:column;padding:11px 11px 0 11px;min-height:0}
.set{display:flex;align-items:center;width:334px;height:29px;box-sizing:border-box;border:1px solid #d0d0d0;flex:none;padding-left:1px;white-space:nowrap}
.set>span:first-child{width:78px;flex:none}
.set ui-radio:first-of-type{margin-left:18px}.set ui-radio+ui-radio{margin-left:10px}.sep{width:1px;height:20px;background:#ccc;margin:0 14px 0 11px;flex:none}
.mid{display:flex;gap:7px;margin-top:7px;height:345px;flex:none}
.gr{flex:1;background:#fff;border:1px solid #ccc;box-sizing:border-box}
.tb{display:grid;grid-template-columns:16px 110px 101px;grid-template-rows:16px 31px 27px;width:max-content;font-size:12px}
.tb div{border-right:1px solid #d5d5d5;border-bottom:1px solid #d5d5d5;box-sizing:border-box;display:flex;align-items:center;padding-left:3px;line-height:14px;color:#222}
.tb .hd{background:#f0f0f0;justify-content:center;padding:0;color:#444}
.dg{background:linear-gradient(to top right,#ebebeb calc(50% - .6px),#222 calc(50% - .6px),#222 calc(50% + .6px),#ebebeb calc(50% + .6px));flex-direction:column;align-items:stretch!important;justify-content:space-between;padding:3px 0 0 0!important}
.dg span:first-child{text-align:right;padding-right:7px}
.acts{display:flex;margin-top:6px;gap:6px;flex:none}.acts ui-btn{width:65px}
.sec{display:flex;align-items:center;height:28px;flex:none;margin-top:0}.sec i{flex:1;height:1px;background:#b8b8b8;margin:-2px 0 0 0}
.ra{display:flex;height:21px;margin-top:-2px;align-items:center;padding-left:1px;flex:none}.ra ui-radio+ui-radio{margin-left:62px}
.ck{display:flex;align-items:center;gap:2px;height:23px;flex:none;margin-top:1px;padding-left:1px}.ck span{width:14px;height:14px;box-sizing:border-box;border:1px solid #888;border-radius:2px;background:#fff}
.l2{height:1px;background:#b0b0b0;margin-top:4px;flex:none}
.foot{display:flex;justify-content:flex-end;gap:6px;margin-top:6px;flex:none}.foot ui-btn{width:78px}
.grip{position:absolute;right:2px;bottom:2px;width:8px;height:8px;background:radial-gradient(#777 45%,transparent 50%) 0 0/3px 3px}`,
 e=>`<div class="ti"><b>${at(e,'heading')}</b><svg width="10" height="10" viewBox="0 0 10 10"><rect x="1.500" y="1.500" width="7" height="7" fill="none" stroke="#fff" stroke-width="1.200"/></svg><svg width="10" height="10" viewBox="0 0 10 10"><path d="M1 1l8 8M9 1l-8 8" stroke="#fff" stroke-width="1.200"/></svg></div>
 <div class="body"><div class="set"><span>侧面钢筋设置:</span><ui-radio checked>梁腹板高</ui-radio><ui-radio>梁高</ui-radio><span class="sep"></span><ui-btn style="width:90px">梁腹板高设置</ui-btn></div>
 <div class="mid"><div class="gr"><div class="tb"><div class="hd"></div><div class="hd">1</div><div class="hd">2</div><div class="hd">1</div><div class="dg"><span>梁腹板高</span><span>梁宽</span></div><div>0~450</div><div class="hd">2</div><div>0~200</div><div>G2B12</div></div></div><beam-figure></beam-figure></div>
 <div class="acts"><ui-btn>查看说明</ui-btn><ui-btn style="margin-left:61px">导入</ui-btn><ui-btn>导出</ui-btn><ui-btn>添加行</ui-btn><ui-btn>添加列</ui-btn><ui-btn off>删除行</ui-btn><ui-btn off>删除列</ui-btn></div>
 <div class="sec"><span>生成方式</span><i></i></div>
 <div class="ra"><ui-radio checked>选择图元</ui-radio><ui-radio>选择楼层</ui-radio></div>
 <div class="ck"><span></span>覆盖梁跨中手动编辑的侧面原位标注筋</div><div class="l2"></div>
 <div class="foot"><ui-btn primary>确定</ui-btn><ui-btn>取消</ui-btn></div></div><div class="grip"></div>`);
function arrow(tx,ty,hx,hy,Ln,W,n){const d=Math.hypot(hx-tx,hy-ty),ux=(hx-tx)/d,uy=(hy-ty)/d,px=-uy,py=ux;
 const bx=hx-ux*Ln,by=hy-uy*Ln,nx=hx-ux*Ln*.8,ny=hy-uy*Ln*.8,f=v=>v.toFixed(1);
 return `<polygon fill="#f63c33" points="${tx},${ty} ${f(nx+px*n)},${f(ny+py*n)} ${f(bx+px*W)},${f(by+py*W)} ${hx},${hy} ${f(bx-px*W)},${f(by-py*W)} ${f(nx-px*n)},${f(ny-py*n)}"/>`}
def('anno-layer',`:host{position:absolute;left:0;top:0;width:1683px;height:961px;pointer-events:none}svg{display:block}text{font-family:"Noto Sans CJK SC",sans-serif}`,
 ()=>`<svg width="1683" height="961" viewBox="0 0 1683 961"><g fill="none" stroke="#ee1fee">
 <ellipse cx="1513" cy="50.500" rx="56" ry="12" stroke-width="3"/><ellipse cx="663" cy="244.500" rx="42" ry="16" stroke-width="2.500"/><ellipse cx="781" cy="360" rx="170" ry="77" stroke-width="2.500"/><ellipse cx="1272" cy="775" rx="73" ry="29.500" stroke-width="2.500"/></g>
 ${arrow(1009,657,846,417,34,12,5)}${arrow(589,677,731,713,42,10,5)}${arrow(556,691,602,713,24,11,5)}${arrow(1062,748,1203,773,34,9,4)}
 <polygon points="1065,713 1071,723 1060,723" fill="#f63c33"/>
 <text x="1034" y="648" font-size="16" fill="#e422e4">在这里设置好，统一生成也行</text></svg>`);
</script>
</body>
</html>
